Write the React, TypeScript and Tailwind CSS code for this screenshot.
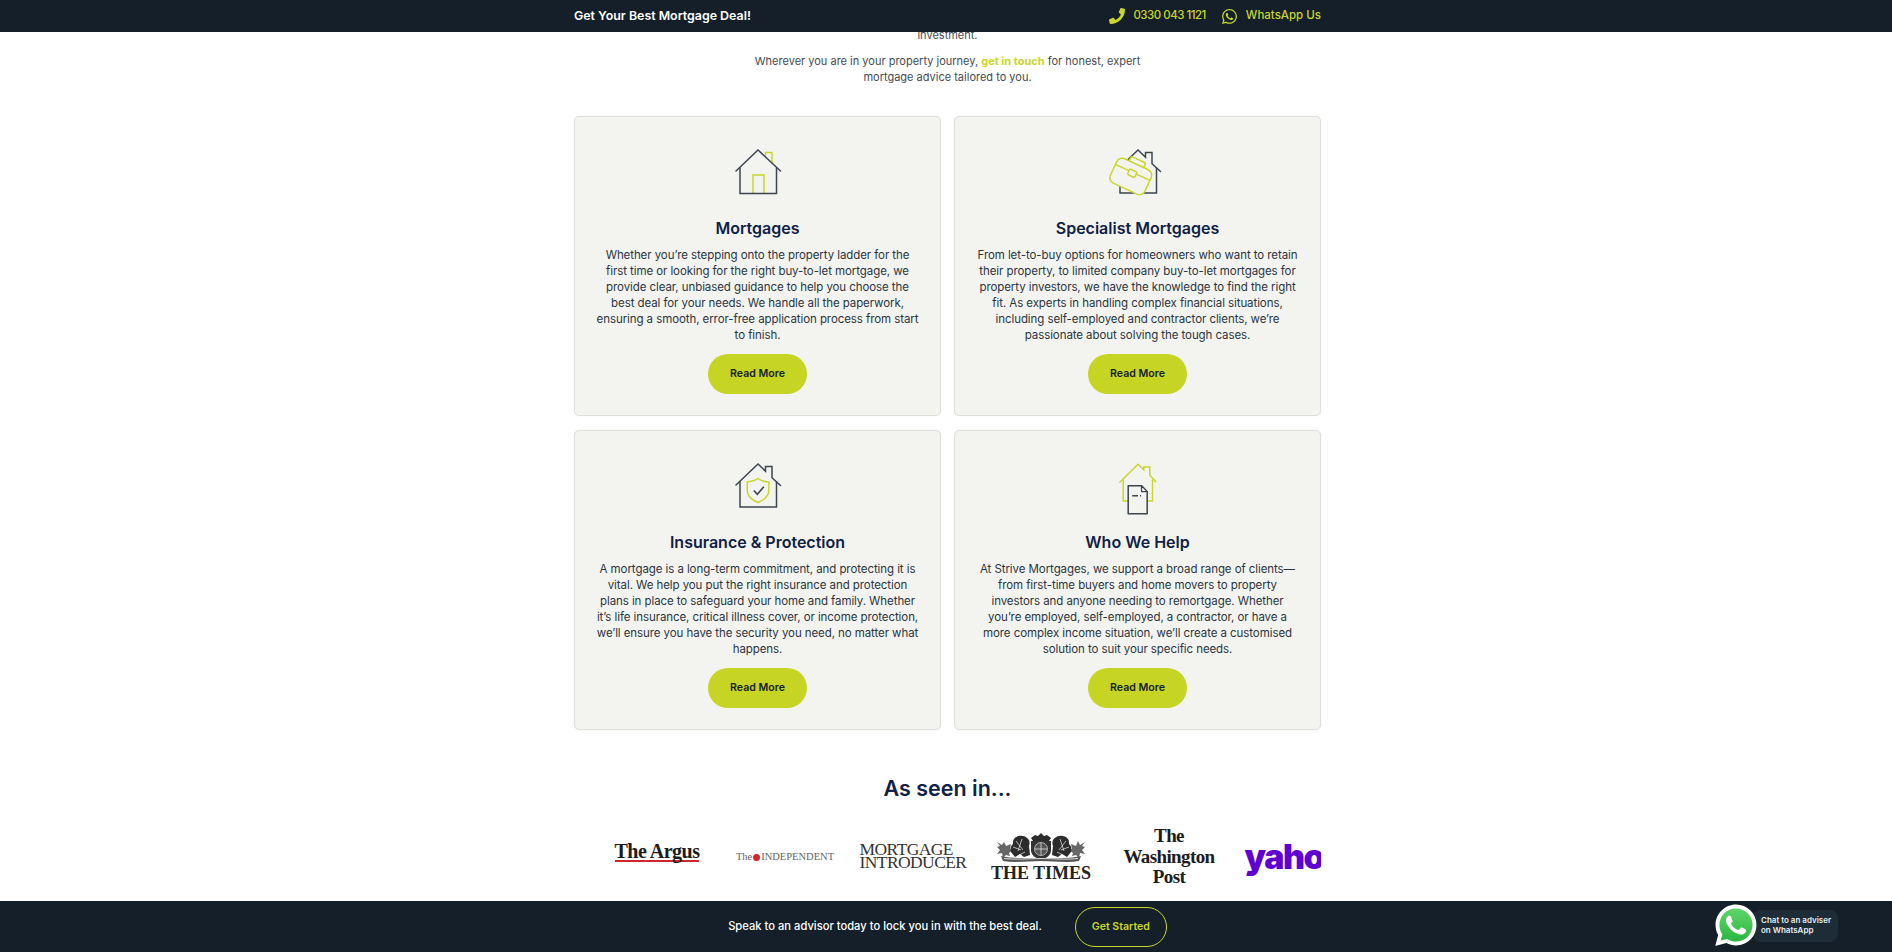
import React from "react";
import { FaPhone, FaWhatsapp } from "react-icons/fa";

const D = "#3c4450";
const L = "#c9d62c";

function HouseBase({ color = D }: { color?: string }) {
  return (
    <g fill="none" stroke={color} strokeWidth="1.5" strokeLinejoin="miter">
      <path d="M8 26 30 5l7.500 7.200V7.500H44v11.200l8.500 7.800" strokeLinecap="round" />
      <path d="M12 22.500v25.500h36.500V22.500" />
    </g>
  );
}

function IconHome() {
  return (
    <svg width="60" height="56" viewBox="0 0 60 56">
      <g fill="none" stroke={L} strokeWidth="1.5">
        <path d="M37.500 11V7.500H44v11" />
        <path d="M25 48.500V30h11v18.500" />
      </g>
      <g fill="none" stroke={D} strokeWidth="1.5">
        <path d="M8 26 30 5l22.500 21" strokeLinecap="round" />
        <path d="M12 22.500V48.500H48.500V22.500" />
      </g>
    </svg>
  );
}

function IconCase() {
  return (
    <svg width="60" height="56" viewBox="0 0 60 56">
      <HouseBase />
      <g transform="rotate(25 23 31)" fill="#f3f4f0" stroke={L} strokeWidth="1.5" strokeLinejoin="round">
        <path d="M15 18v-3a2 2 0 0 1 2-2h12a2 2 0 0 1 2 2v3" />
        <rect x="4" y="18" width="38" height="27" rx="6" />
        <path d="M4 27h38" fill="none" />
        <rect x="19" y="25" width="8" height="6" rx="1" />
      </g>
    </svg>
  );
}

function IconShield() {
  return (
    <svg width="60" height="56" viewBox="0 0 60 56">
      <HouseBase />
      <path d="M30 19.500c3.200 2.300 6.800 3.300 10.800 3.500v8.500c0 5.500-4.800 9.500-10.800 12-6-2.500-10.800-6.500-10.800-12V23c4-.2 7.600-1.200 10.800-3.500z" fill="none" stroke={L} strokeWidth="1.5" />
      <path d="m25.800 31.500 3.500 3.800 6.500-7.500" fill="none" stroke={D} strokeWidth="1.6" />
    </svg>
  );
}

function IconDoc() {
  return (
    <svg width="60" height="56" viewBox="0 0 60 56" className="overflow-visible">
      <g fill="none" stroke={L} strokeWidth="1.5">
        <path d="M11.800 23.300 30 5.300l5.800 5.400V8h6v8.200l6 6.500" strokeLinecap="round" />
        <path d="M15.200 20.500V42h5M44.500 20.500V42h-5" />
      </g>
      <path d="M20.200 26.700h13.300l5.700 6V54.700h-19z" fill="#f3f4f0" stroke={D} strokeWidth="1.5" strokeLinejoin="round" />
      <path d="M33.500 26.700v6h5.700z" fill="#f3f4f0" stroke={D} strokeWidth="1.2" strokeLinejoin="round" />
      <path d="M24.200 36.700H30M32 36.700h1" stroke={D} strokeWidth="1.5" />
    </svg>
  );
}

function Card({ icon, title, children }: { icon: React.ReactNode; title: string; children: React.ReactNode }) {
  return (
    <div className="flex h-[300px] flex-col items-center rounded-[5px] border border-[#dedfdb] bg-[#f3f4f0] pt-[28px] pb-[21px] text-center shadow-[0_0_2px_rgba(0,0,0,0.05)]">
      <div className="flex h-[56px] items-start">{icon}</div>
      <h3 className="mt-[15px] text-[16px] leading-6 font-semibold text-[#0f2145]">{title}</h3>
      <p className="mt-[7px] text-[11.5px] leading-4 tracking-[-0.08px] whitespace-nowrap text-[#2c3540]">{children}</p>
      <button className="mt-auto h-10 w-[99px] rounded-full bg-[#c6d424] text-[10.6px] font-semibold text-[#15202b]">Read More</button>
    </div>
  );
}

function WhatsLogo({ size }: { size: number }) {
  return (
    <svg width={size} height={size} viewBox="4 4 40 40">
      <path fill="#fff" d="M4.868,43.803c-0.132,0-0.26-0.052-0.355-0.148c-0.125-0.127-0.174-0.312-0.127-0.483l2.639-9.636c-1.636-2.906-2.499-6.206-2.497-9.556C4.532,13.238,13.273,4.5,24.014,4.500c5.21,0.002,10.105,2.031,13.784,5.713c3.679,3.683,5.704,8.577,5.702,13.781c-0.004,10.741-8.746,19.48-19.486,19.48c-3.189-0.001-6.344-0.788-9.144-2.277l-9.875,2.589C4.953,43.798,4.911,43.803,4.868,43.803z" />
      <defs>
        <linearGradient id="wa" x1="0" y1="0" x2="0" y2="1">
          <stop offset="0" stopColor="#5fd568" />
          <stop offset="1" stopColor="#2bb741" />
        </linearGradient>
      </defs>
      <path fill="url(#wa)" d="M35.176,12.832c-2.98-2.982-6.941-4.625-11.157-4.626c-8.704,0-15.783,7.076-15.787,15.774c-0.001,2.981,0.833,5.883,2.413,8.396l0.376,0.597l-1.595,5.821l5.973-1.566l0.577,0.342c2.422,1.438,5.2,2.198,8.032,2.199h0.006c8.698,0,15.777-7.077,15.78-15.776C39.795,19.778,38.156,15.814,35.176,12.832z" />
      <path fill="#fff" fillRule="evenodd" d="M19.268,16.045c-0.355-0.79-0.729-0.806-1.068-0.82c-0.277-0.012-0.593-0.011-0.909-0.011c-0.316,0-0.83,0.119-1.265,0.594c-0.435,0.475-1.661,1.622-1.661,3.956c0,2.334,1.7,4.59,1.937,4.906c0.237,0.316,3.282,5.259,8.104,7.161c4.007,1.58,4.823,1.266,5.693,1.187c0.87-0.079,2.807-1.147,3.202-2.255c0.395-1.108,0.395-2.057,0.277-2.255c-0.119-0.198-0.435-0.316-0.909-0.554s-2.807-1.385-3.242-1.543c-0.435-0.158-0.751-0.237-1.068,0.238c-0.316,0.474-1.225,1.543-1.502,1.859c-0.277,0.317-0.554,0.357-1.028,0.119c-0.474-0.238-2.002-0.738-3.815-2.354c-1.41-1.257-2.362-2.81-2.639-3.285c-0.277-0.474-0.03-0.731,0.208-0.968c0.213-0.213,0.474-0.554,0.712-0.831c0.237-0.277,0.316-0.475,0.474-0.791c0.158-0.317,0.079-0.594-0.04-0.831C20.612,19.329,19.69,16.983,19.268,16.045z" />
    </svg>
  );
}

function TimesCrest() {
  return (
    <svg width="92" height="30" viewBox="0 0 92 30">
      <g fill="#666">
        <path d="M2 9l5 3 2-3 2 4 5-2-1 5 3 1-4 3 1 3-4-1-3 3-1-5-5 1 3-4-3-3 3-1z" />
        <path d="M90 9l-5 3-2-4-2 5-5-2 1 5-3 1 4 3-1 3 4-1 3 3 1-5 5 1-3-4 3-3-3-1z" />
      </g>
      <g fill="#2c2c2c">
        <path d="M19 6c3-4 10-4 13-1 3 2 3 5 2 8l1 9-6 2-4-3-5 3-4-5c-1-4 0-6 2-8 0-2 0-4 1-5z" />
        <path d="M73 6c-3-4-10-4-13-1-3 2-3 5-2 8l-1 9 6 2 4-3 5 3 4-5c1-4 0-6-2-8 0-2 0-4-1-5z" />
        <path d="M36 5l4-3 3 1 3-3 3 3 3-1 4 3-2 3H38z" />
      </g>
      <path d="M36 8h20v9c0 5-4 8-10 10-6-2-10-5-10-10z" fill="#333" />
      <circle cx="46" cy="16" r="6.500" fill="#555" stroke="#ddd" strokeWidth=".7" />
      <g fill="none" stroke="#eee" strokeWidth=".7">
        <path d="M46 10v12M40 16h12M21 8l7 9M27 6l-4 12M18 14l8 3M71 8l-7 9M65 6l4 12M74 14l-8 3M30 19l-6 3M62 19l6 3" />
      </g>
      <path d="M6 23c11 3 26 2 40 2s29 1 40-2l-2 5c-12 2-25 0-38 0s-26 2-38 0z" fill="#555" />
      <path d="M9 25.500c12 1.500 25 0 37 0s25 1.500 37 0" fill="none" stroke="#fff" strokeWidth=".8" />
    </svg>
  );
}

export default function App() {
  const serif = "font-['Liberation_Serif',serif]";
  return (
    <div className="relative flex h-[952px] w-full flex-col overflow-hidden bg-white font-['Inter','Liberation_Sans',sans-serif]">
      <header className="relative z-10 flex h-8 shrink-0 justify-center bg-[#141f29] pl-[3px]">
        <div className="flex w-[747px] items-center justify-between">
          <span className="text-[12.4px] font-semibold text-white">Get Your Best Mortgage Deal!</span>
          <div className="flex items-center text-[11.5px] font-medium text-[#c9d62c]">
            <FaPhone className="h-4 w-4" />
            <span className="ml-2 tracking-[-0.5px]">0330 043 1121</span>
            <FaWhatsapp className="ml-[15px] h-[17px] w-[17px]" />
            <span className="ml-2">WhatsApp Us</span>
          </div>
        </div>
      </header>

      <main className="flex min-h-0 flex-1 flex-col items-center overflow-hidden pl-[3px]">
        <div className="-mt-[5px] text-center text-[11px] leading-4 text-[#454b52]">
          <p>investment.</p>
          <p className="mt-[10px]">
            Wherever you are in your property journey, <a className="font-bold text-[#c9d62c]">get in touch</a> for honest, expert
            <br />
            mortgage advice tailored to you.
          </p>
        </div>

        <div className="mt-[31px] grid w-[747px] grid-cols-2 gap-x-[13px] gap-y-[14px]">
          <Card icon={<IconHome />} title="Mortgages">
            Whether you’re stepping onto the property ladder for the<br />
            first time or looking for the right buy-to-let mortgage, we<br />
            provide clear, unbiased guidance to help you choose the<br />
            best deal for your needs. We handle all the paperwork,<br />
            ensuring a smooth, error-free application process from start<br />
            to finish.
          </Card>
          <Card icon={<IconCase />} title="Specialist Mortgages">
            From let-to-buy options for homeowners who want to retain<br />
            their property, to limited company buy-to-let mortgages for<br />
            property investors, we have the knowledge to find the right<br />
            fit. As experts in handling complex financial situations,<br />
            including self-employed and contractor clients, we’re<br />
            passionate about solving the tough cases.
          </Card>
          <Card icon={<IconShield />} title="Insurance & Protection">
            A mortgage is a long-term commitment, and protecting it is<br />
            vital. We help you put the right insurance and protection<br />
            plans in place to safeguard your home and family. Whether<br />
            it’s life insurance, critical illness cover, or income protection,<br />
            we’ll ensure you have the security you need, no matter what<br />
            happens.
          </Card>
          <Card icon={<IconDoc />} title="Who We Help">
            At Strive Mortgages, we support a broad range of clients—<br />
            from first-time buyers and home movers to property<br />
            investors and anyone needing to remortgage. Whether<br />
            you’re employed, self-employed, a contractor, or have a<br />
            more complex income situation, we’ll create a customised<br />
            solution to suit your specific needs.
          </Card>
        </div>

        <h2 className="mt-[42px] text-[21.5px] leading-8 font-semibold text-[#0f2145]">As seen in...</h2>

        <div className="mt-[22px] flex h-[62px] w-[747px] items-center overflow-hidden pl-[19px]">
          <div className="flex w-[128px] shrink-0 justify-center pb-[9px]">
            <div className={`${serif} border-b-[2px] border-[#d1262d] text-[20px] leading-[17px] font-bold tracking-[-0.5px] text-[#1c1c1c]`}>The Argus</div>
          </div>
          <div className="flex w-[128px] shrink-0 items-center justify-center">
            <div className={`${serif} flex items-center text-[10.5px] leading-3 whitespace-nowrap text-[#666]`}>
              The<span className="mx-px inline-block h-[7px] w-[7px] rounded-full bg-[#d1262d]" />INDEPENDENT
            </div>
          </div>
          <div className="flex w-[128px] shrink-0 justify-center pb-[2px]">
            <div className={`${serif} text-[17.5px] leading-[13.5px] font-light tracking-[-0.6px] whitespace-nowrap text-[#333]`}>
              MORTGAGE<br />INTRODUCER
            </div>
          </div>
          <div className="flex w-[128px] shrink-0 flex-col items-center">
            <TimesCrest />
            <div className={`${serif} mt-[3px] text-[18px] leading-[15px] font-bold whitespace-nowrap text-[#222]`}>THE TIMES</div>
          </div>
          <div className="flex w-[128px] shrink-0 justify-center">
            <div className={`${serif} text-center text-[19px] leading-[20.5px] font-bold tracking-[-0.6px] text-[#1c1c1c]`}>
              The<br />Washington<br />Post
            </div>
          </div>
          <div className="flex w-[128px] shrink-0 justify-center pl-[5px]">
            <span className="text-[34px] leading-8 font-black tracking-[-1.5px] text-[#6001d2]">yahoo!</span>
          </div>
        </div>
      </main>

      <footer className="relative flex h-[51px] shrink-0 items-center justify-center gap-[33px] bg-[#141f29] pl-[3px]">
        <span className="text-[11.2px] font-medium text-white">Speak to an advisor today to lock you in with the best deal.</span>
        <button className="h-10 w-[92px] rounded-full border border-[#c9d62c] text-[10.6px] font-semibold text-[#c9d62c]">Get Started</button>
        <div className="absolute top-[3px] left-[1715px] flex items-center">
          <div className="absolute top-[6px] left-[38px] h-8 w-[85px] rounded-lg bg-[#1e2c38] pt-[6px] pl-[8px] text-[8px] leading-[9.5px] font-semibold whitespace-nowrap text-[#e8ecef]">
            Chat to an adviser<br />on WhatsApp
          </div>
          <div className="relative"><WhatsLogo size={42} /></div>
        </div>
      </footer>
    </div>
  );
}
